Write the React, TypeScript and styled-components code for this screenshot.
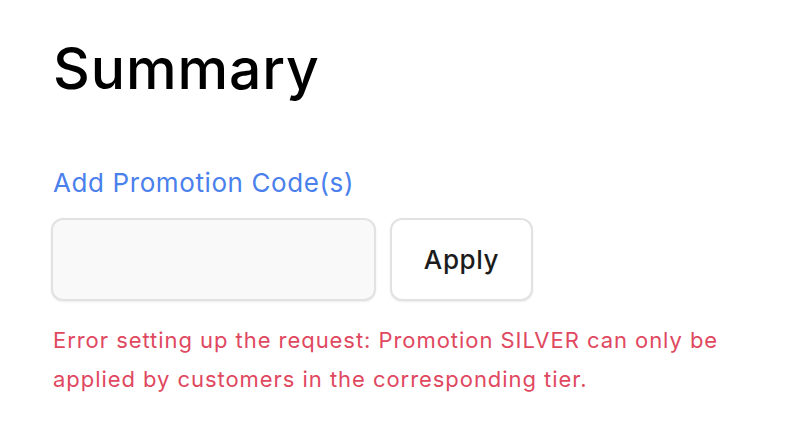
import React from "react";
import styled, { createGlobalStyle } from "styled-components";

const Global = createGlobalStyle`
  html, body { margin: 0; padding: 0; background: #ffffff; }
  body { font-family: "Inter", "Liberation Sans", sans-serif; -webkit-font-smoothing: antialiased; }
`;

const Page = styled.div`
  padding: 37px 40px 0 51px;
  display: flex;
  flex-direction: column;
`;

const Title = styled.h1`
  margin: 0 0 0 2px;
  font-size: 57px;
  font-weight: 500;
  line-height: 64px;
  color: #000;
  letter-spacing: 0.9px;
`;

const PromoLink = styled.a`
  margin: 66px 0 0 2px;
  font-size: 26px;
  line-height: 32px;
  color: #4a80ec;
  letter-spacing: 0.6px;
  text-decoration: none;
  cursor: pointer;
  align-self: flex-start;
`;

const Row = styled.div`
  display: flex;
  gap: 14px;
  margin-top: 19px;
`;

const CodeInput = styled.input`
  box-sizing: border-box;
  width: 325px;
  height: 83px;
  border: 2px solid #e2e2e2;
  border-radius: 12px;
  background: #f9f9f9;
  box-shadow: 0 1px 2px rgba(0, 0, 0, 0.08);
  outline: none;
  font: inherit;
  font-size: 24px;
  padding: 0 16px;
`;

const ApplyButton = styled.button`
  box-sizing: border-box;
  width: 143px;
  height: 83px;
  border: 2px solid #e2e2e2;
  border-radius: 12px;
  background: #ffffff;
  box-shadow: 0 1px 2px rgba(0, 0, 0, 0.08);
  font: inherit;
  font-size: 26px;
  font-weight: 500;
  letter-spacing: 0.6px;
  color: #1c1c1c;
  cursor: pointer;
`;

const ErrorText = styled.p`
  margin: 20px 0 0 2px;
  max-width: 700px;
  font-size: 22px;
  line-height: 39px;
  letter-spacing: 0.95px;
  color: #e0485f;
`;

export default function App() {
  return (
    <>
      <Global />
      <Page>
        <Title>Summary</Title>
        <PromoLink>Add Promotion Code(s)</PromoLink>
        <Row>
          <CodeInput type="text" />
          <ApplyButton>Apply</ApplyButton>
        </Row>
        <ErrorText>
          Error setting up the request: Promotion SILVER can only be applied by customers in the corresponding tier.
        </ErrorText>
      </Page>
    </>
  );
}
